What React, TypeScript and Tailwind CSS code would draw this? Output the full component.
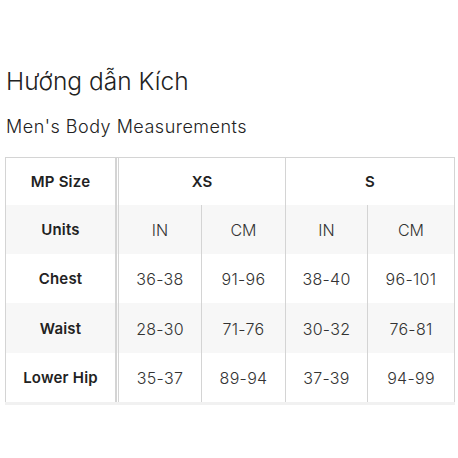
import React from "react";

const rows = [
  { label: "Chest", v: ["36-38", "91-96", "38-40", "96-101"], bg: "bg-white", h: "h-[49px]" },
  { label: "Waist", v: ["28-30", "71-76", "30-32", "76-81"], bg: "bg-[#f7f7f7]", h: "h-[50px]" },
  { label: "Lower Hip", v: ["35-37", "89-94", "37-39", "94-99"], bg: "bg-white", h: "h-[49px]" },
];

const widths = ["w-[83px]", "w-[84px]", "w-[82px]", "w-[87px]"];

function Sep() {
  return (
    <>
      <div className="w-[2px] self-stretch bg-[#d4d4d4]" />
      <div className="w-[1px] self-stretch" />
    </>
  );
}

export default function App() {
  return (
    <div className="w-[458px] h-[458px] bg-white text-[#222]" style={{ fontFamily: "Inter, 'Noto Sans', sans-serif" }}>
      <div className="pl-[5px] pt-[65px]">
        <h1 className="text-[24.5px] leading-[32px] font-light tracking-[0px] pl-[1px]">Hướng dẫn Kích</h1>
        <h2 className="mt-[16px] text-[18px] leading-[28px] font-light pl-[1px] tracking-[0.5px]">Men's Body Measurements</h2>
        <div className="mt-[16px] w-[450px] border border-b-0 border-[#d4d4d4] text-[#333]">
          <div className="flex h-[47px] bg-white items-stretch">
            <div className="w-[109px] flex items-center justify-center pt-[2px] text-[15px] font-semibold tracking-[0.2px] text-[#222]">MP Size</div>
            <Sep />
            <div className="w-[167px] border-l border-[#d4d4d4] flex items-center justify-center pt-[2px] text-[15px] font-semibold text-[#222]">XS</div>
            <div className="w-[169px] border-l border-[#d4d4d4] flex items-center justify-center pt-[2px] text-[15px] font-semibold text-[#222]">S</div>
          </div>
          <div className="flex h-[49px] bg-[#f7f7f7] items-stretch">
            <div className="w-[109px] flex items-center justify-center pt-[2px] text-[15px] font-semibold tracking-[0.2px] text-[#222]">Units</div>
            <Sep />
            {["IN", "CM", "IN", "CM"].map((u, i) => (
              <div key={i} className={`${widths[i]} border-l border-[#d4d4d4] flex items-center justify-center pt-[1px] text-[16px] font-light`}>{u}</div>
            ))}
          </div>
          {rows.map((r) => (
            <div key={r.label} className={`flex ${r.h} ${r.bg} items-stretch`}>
              <div className="w-[109px] flex items-center justify-center pt-[2px] text-[15px] font-semibold tracking-[0.2px] text-[#222]">{r.label}</div>
              <Sep />
              {r.v.map((v, i) => (
                <div key={i} className={`${widths[i]} border-l border-[#d4d4d4] flex items-center justify-center pt-[1px] text-[16px] font-light tracking-[0.3px]`}>{v}</div>
              ))}
            </div>
          ))}
        </div>
        <div className="w-[450px] h-[3px] bg-[#f1f1f1]" />
      </div>
    </div>
  );
}
